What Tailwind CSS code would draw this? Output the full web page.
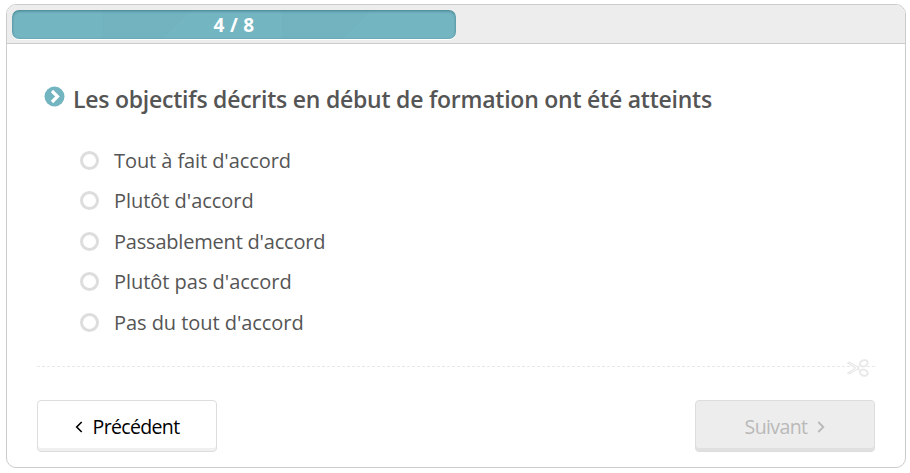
<!DOCTYPE html>
<html lang="fr">
<head>
  <meta charset="UTF-8">
  <title>Questionnaire de satisfaction</title>
  <script src="https://cdn.jsdelivr.net/npm/@tailwindcss/browser@4"></script>
</head>
<body class="bg-white pl-1.5 pt-1 font-['Open_Sans','Noto_Sans',sans-serif] text-[#555]">

  <form class="w-[900px] h-[464px] border border-[#ccc] rounded-[10px] overflow-hidden">
    <!-- progression -->
    <div class="h-[39px] bg-[#ededed] border-b border-[#ccc] pl-[5px] pt-[5px]">
      <div class="w-[444px] h-[29px] rounded-[7px] bg-[#74b5c2] bg-[linear-gradient(135deg,rgba(0,60,80,0.02)_50%,transparent_50%),linear-gradient(135deg,rgba(0,60,80,0.02)_50%,transparent_50%)] bg-[length:90px_90px] bg-[position:90px_0,270px_0] bg-no-repeat shadow-[inset_0_1px_3px_rgba(0,60,75,0.45),0_1px_0_#fff] text-white text-[19px] font-bold tracking-[0.3px] leading-[30px] text-center">4 / 8</div>
    </div>

    <div class="px-[30px] pt-[40px]">
      <h2 class="flex items-start pl-[7px] h-8 whitespace-nowrap">
        <svg class="w-[21px] h-[21px] mt-[1.5px] mr-2 shrink-0" viewBox="0 0 21 21">
          <circle cx="10.5" cy="10.5" r="10" fill="#73b4c1"/>
          <path d="M8 5l5.500 5.5L8 16" fill="none" stroke="#fff" stroke-width="3.2"/>
        </svg>
        <span class="text-[23px] leading-[31px] font-semibold tracking-[-0.235px]">Les objectifs décrits en début de formation ont été atteints</span>
      </h2>

      <div class="mt-[24px] pl-[43px] text-[20px]">
        <label class="flex items-center h-[40.5px]"><input type="radio" name="q4" class="appearance-none w-[19px] h-[19px] border-3 border-[#ddd] rounded-full mr-[15px]"><span class="pt-px tracking-[-0.08px]">Tout à fait d'accord</span></label>
        <label class="flex items-center h-[40.5px]"><input type="radio" name="q4" class="appearance-none w-[19px] h-[19px] border-3 border-[#ddd] rounded-full mr-[15px]"><span class="pt-px tracking-[-0.03px]">Plutôt d'accord</span></label>
        <label class="flex items-center h-[40.5px]"><input type="radio" name="q4" class="appearance-none w-[19px] h-[19px] border-3 border-[#ddd] rounded-full mr-[15px]"><span class="pt-px tracking-[-0.2px]">Passablement d'accord</span></label>
        <label class="flex items-center h-[40.5px]"><input type="radio" name="q4" class="appearance-none w-[19px] h-[19px] border-3 border-[#ddd] rounded-full mr-[15px]"><span class="pt-px tracking-[-0.03px]">Plutôt pas d'accord</span></label>
        <label class="flex items-center h-[40.5px]"><input type="radio" name="q4" class="appearance-none w-[19px] h-[19px] border-3 border-[#ddd] rounded-full mr-[15px]"><span class="pt-px tracking-[-0.05px]">Pas du tout d'accord</span></label>
      </div>

      <div class="relative mt-[23px] border-t border-dashed border-[#e8e8e8]">
        <svg class="absolute right-1.5 -top-[8px] w-[22px] h-[18px]" viewBox="0 0 22 18" fill="none" stroke="#e9e9e9">
          <ellipse cx="16.800" cy="4.300" rx="4" ry="3" transform="rotate(-22 16.8 4.3)" stroke-width="2"/>
          <ellipse cx="16.800" cy="13.700" rx="4" ry="3" transform="rotate(22 16.8 13.7)" stroke-width="2"/>
          <path d="M13.500 6.400l-2.700 1.600L2.500 3.200.800 3.900l7.700 5.100-7.700 5.100 1.700.7L10.800 10l2.700 1.600" fill="#fff" stroke-width="1.3" stroke-linejoin="round"/>
          <circle cx="11.300" cy="9" r=".9" stroke-width="1"/>
        </svg>
      </div>

      <div class="flex justify-between mt-[33px] text-[19.5px]">
        <button type="button" class="flex items-center justify-center w-[180px] h-[52px] bg-white border border-[#ddd] rounded-[4px] shadow-[inset_0_-3px_0_#f0f0f0] text-black">
          <svg class="w-2 h-3 mr-[10px] mt-[3px]" viewBox="0 0 8 12" fill="none" stroke="currentColor" stroke-width="1.6"><path d="M6.700 1L1.700 6l5 5"/></svg>
          <span class="pt-0.5 tracking-[-0.65px]">Précédent</span>
        </button>
        <button type="button" disabled class="flex items-center justify-center w-[180px] h-[52px] bg-[#ededed] border border-[#ddd] rounded-[4px] shadow-[inset_0_-3px_0_#e0e0e0] text-[#b9b9b9]">
          <span class="pt-0.5 tracking-[-0.6px]">Suivant</span>
          <svg class="w-2 h-3 ml-[10px] mt-[3px]" viewBox="0 0 8 12" fill="none" stroke="currentColor" stroke-width="1.8"><path d="M1.300 1l5 5-5 5"/></svg>
        </button>
      </div>
    </div>
  </form>

</body>
</html>
